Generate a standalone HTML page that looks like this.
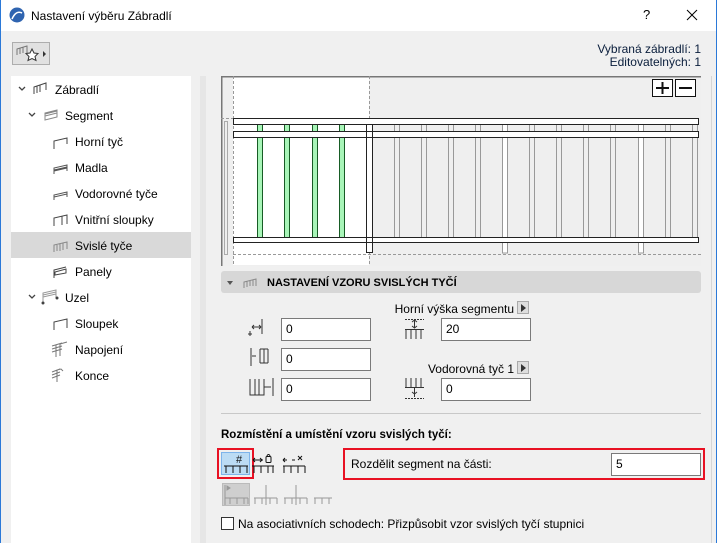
<!DOCTYPE html>
<html><head><meta charset="utf-8"><style>
*{margin:0;padding:0;box-sizing:border-box}
body{width:717px;height:543px;overflow:hidden;background:#f0f0f0;font-family:"Liberation Sans",sans-serif;font-size:12px;color:#000;position:relative}
.a{position:absolute}
.t{position:absolute;white-space:nowrap;line-height:14px}
.inp{position:absolute;background:#fff;border:1px solid #7a7a7a;height:23px;padding-left:4px;line-height:21px}
.row{position:absolute;left:11px;width:180px;height:26px}
</style></head><body>
<div class="a" style="left:0;top:0;width:717px;height:31px;background:#fff"></div>
<div class="a" style="left:0;top:0;width:1px;height:543px;background:#2b79d8"></div>
<div class="a" style="left:716px;top:0;width:1px;height:543px;background:#2b79d8"></div>
<svg class="a" style="left:9px;top:7px" width="16" height="16"><circle cx="8" cy="8" r="7.5" fill="#2f64b0"/><path d="M3 12 Q7 3 13 6" stroke="#fff" stroke-width="1.6" fill="none"/></svg>
<div class="t" style="left:31px;top:9px;font-size:12px">Nastavení výběru Zábradlí</div>
<div class="t" style="left:643px;top:8px;font-size:13px">?</div>
<svg class="a" style="left:686px;top:9px" width="12" height="12"><path d="M1 1L11 11M11 1L1 11" stroke="#000" stroke-width="1"/></svg>

<div class="a" style="left:12px;top:42px;width:38px;height:23px;background:#e1e1e1;border:1px solid #adadad"></div>
<svg class="a" style="left:15px;top:45px" width="34" height="18"><path d="M2 10V4L12 1V8M5 9V3M8 8V2M2 4L12 1" stroke="#777" fill="none"/><path d="M17 4l2 4 4 .5-3 3 1 4-4-2-4 2 1-4-3-3 4-.5z" stroke="#333" fill="#fff"/><path d="M28 6l3 3-3 3z" fill="#333"/></svg>
<div class="t" style="right:16px;top:42px;text-align:right;color:#0a1e3c">Vybraná zábradlí: 1</div>
<div class="t" style="right:16px;top:55px;text-align:right;color:#0a1e3c">Editovatelných: 1</div>

<div class="a" style="left:11px;top:76px;width:180px;height:467px;background:#fff"></div>
<div class="a" style="left:200px;top:76px;width:6px;height:467px;background:#e6e6e6"></div>
<div class="row" style="top:232px;background:#d9d9d9"></div>
<svg class="a" style="left:0;top:76px" width="191" height="320" fill="none" stroke="#444">
<path d="M19 11l3 3 3-3M29 37l3 3 3-3M29 219l3 3 3-3" stroke="#444" stroke-width="1.3"/>
<path d="M34 18V11L46 7V14M34 11L46 7M40 9V16M37 10v7" />
<path d="M45 44V37l12-3v7zM45 40l12-3M45 38l12-3" stroke="#888"/>
<path d="M54 73v-8l13-3v6" />
<path d="M54 98v-6l13-3v6M54 95l13-3M54 94l13-3" stroke="#555"/>
<path d="M54 124v-5l13-3v5M54 121l13-3" stroke="#555"/>
<path d="M54 150v-8l13-3v9M62 149v-9" />
<path d="M54 176v-7l13-3v7M57 175v-6M60 175v-7M63 174v-7" stroke="#888"/>
<path d="M54 202v-8l12-3M55 199l11-2v-4l-11 3z" />
<path d="M43 226v-9l13-3v8M43 219l13-3M43 221l13-3" stroke="#999"/>
<circle cx="43" cy="227" r="1" fill="#333"/><circle cx="57" cy="222" r="1" fill="#333"/>
<path d="M54 254v-8l13-3v9" />
<path d="M52 270l10-3M52 273l10-3M52 276l10-3M56 281v-12M60 280v-12l7-2" stroke="#777"/>
<path d="M52 296l8-3M52 299l8-3M52 302l8-3M57 306v-12l4-1 2 2" stroke="#777"/>
</svg>
<div class="t" style="left:55px;top:83px">Zábradlí</div>
<div class="t" style="left:65px;top:109px">Segment</div>
<div class="t" style="left:75px;top:135px">Horní tyč</div>
<div class="t" style="left:75px;top:161px">Madla</div>
<div class="t" style="left:75px;top:187px">Vodorovné tyče</div>
<div class="t" style="left:75px;top:213px">Vnitřní sloupky</div>
<div class="t" style="left:75px;top:239px">Svislé tyče</div>
<div class="t" style="left:75px;top:265px">Panely</div>
<div class="t" style="left:65px;top:291px">Uzel</div>
<div class="t" style="left:75px;top:317px">Sloupek</div>
<div class="t" style="left:75px;top:343px">Napojení</div>
<div class="t" style="left:75px;top:369px">Konce</div>

<div class="a" style="left:711px;top:76px;width:1px;height:467px;background:#d6d6d6"></div>

<svg class="a" style="left:221px;top:76px" width="480" height="190">
<rect x="0" y="0" width="480" height="190" fill="#efefef"/>
<rect x="12" y="1" width="136" height="188" fill="#fff"/>
<path d="M0.5 0V190M0 0.5H480" stroke="#777" stroke-width="2"/>
<path d="M12.5 0V190M148.5 0V190M0 42.5H12M12 178.5H480" stroke="#999" stroke-dasharray="3,2"/>
<rect x="3.5" y="45.5" width="3" height="133" fill="none" stroke="#aaa"/>
<g stroke="#999" fill="none">
<path d="M173.5 48V162M178.5 48V162M200.5 48V162M205.5 48V162M227.5 48V162M232.5 48V162M254.5 48V162M259.5 48V162M308.5 48V162M313.5 48V162M335.5 48V162M340.5 48V162M362.5 48V162M367.5 48V162M389.5 48V162M394.5 48V162M444.5 48V162M449.5 48V162M471.5 48V162M476.5 48V162"/>
<rect x="281.5" y="48" width="5" height="129" fill="#fff"/>
<rect x="417.5" y="48" width="5" height="129" fill="#fff"/>
</g>
<g stroke="#175c25" fill="#a8f5b8">
<rect x="36.5" y="48" width="5" height="114"/><rect x="63.5" y="48" width="5" height="114"/><rect x="91.5" y="48" width="5" height="114"/><rect x="118.5" y="48" width="5" height="114"/>
</g>
<g fill="#fff" stroke="#222">
<rect x="12.5" y="42.5" width="465" height="6"/>
<rect x="12.5" y="55.5" width="465" height="6"/>
<rect x="12.5" y="161.5" width="465" height="5"/>
</g>
<rect x="145.5" y="48.5" width="6" height="128" fill="#fff" stroke="#222"/>
<path d="M146 55.5h5M146 61.5h5M146 161.5h5M146 166.5h5" stroke="#222"/>
<g fill="#fff" stroke="#111"><rect x="431.5" y="3.5" width="20" height="17"/><rect x="454.5" y="3.5" width="20" height="17"/></g>
<path d="M435 12H448M441.5 6V18M458 12H471" stroke="#111" stroke-width="2"/>
</svg>

<div class="a" style="left:221px;top:271px;width:480px;height:22px;background:#d7d7d7;border-radius:3px"></div>
<svg class="a" style="left:226px;top:278px" width="40" height="12"><path d="M1 3l3 4 3-4z" fill="#555"/><path d="M18 10V4L30 1V8M21 9V3M24 8V2M27 8V2" stroke="#888" fill="none"/></svg>
<div class="t" style="left:267px;top:276px;font-weight:bold;font-size:11px">NASTAVENÍ VZORU SVISLÝCH TYČÍ</div>

<svg class="a" style="left:248px;top:318px" width="30" height="85" fill="none" stroke="#333">
<path d="M14 1V16M4 9H13M4 9l2-2M4 9l2 2M13 9l-2-2M13 9l-2 2M2 13v5M0 16h4"/>
<path d="M3 30v18M8 38H4M12 31v14M16 31v14M20 31v14M12 31h8M12 45h8"/>
<path d="M2 61v16h14V61M7 61v16M11 61v16M16 69h7M25 60v18" />
</svg>
<div class="inp" style="left:281px;top:318px;width:90px">0</div>
<div class="inp" style="left:281px;top:348px;width:90px">0</div>
<div class="inp" style="left:281px;top:378px;width:90px">0</div>

<div class="t" style="right:203px;top:302px">Horní výška segmentu</div>
<div class="a" style="left:517px;top:301px;width:12px;height:13px;background:#ddd;border:1px solid #aaa"></div>
<svg class="a" style="left:520px;top:304px" width="8" height="8"><path d="M1 0l5 4-5 4z" fill="#333"/></svg>
<svg class="a" style="left:405px;top:318px" width="30" height="24" fill="none" stroke="#333">
<path d="M0 1.5h19" stroke-dasharray="2,1"/><path d="M9.5 2v8M7 4l2.5-2 2.5 2M7 8l2.5 2 2.5-2"/><path d="M0 11.5h19M1 11v10M6 11v10M11 11v10M16 11v10"/></svg>
<div class="inp" style="left:441px;top:318px;width:90px">20</div>
<div class="t" style="right:203px;top:362px">Vodorovná tyč 1</div>
<div class="a" style="left:517px;top:361px;width:12px;height:13px;background:#ddd;border:1px solid #aaa"></div>
<svg class="a" style="left:520px;top:364px" width="8" height="8"><path d="M1 0l5 4-5 4z" fill="#333"/></svg>
<svg class="a" style="left:405px;top:378px" width="30" height="24" fill="none" stroke="#333">
<path d="M1 0v10M6 0v10M11 0v10M16 0v10M0 9.5h19"/><path d="M9.5 10v9M7 14l2.5 2 2.5-2"/><path d="M0 20.5h19" stroke-dasharray="2,1"/></svg>
<div class="inp" style="left:441px;top:378px;width:90px">0</div>

<div class="a" style="left:221px;top:413px;width:480px;height:1px;background:#c8c8c8"></div>
<div class="t" style="left:221px;top:428px;font-weight:bold;font-size:11.5px">Rozmístění a umístění vzoru svislých tyčí:</div>

<div class="a" style="left:217px;top:448px;width:37px;height:31px;border:2px solid #e81123"></div>
<div class="a" style="left:221px;top:452px;width:29px;height:23px;background:#bcdcf4;border:1px solid #7eb4ea"></div>
<svg class="a" style="left:221px;top:452px" width="90" height="24" fill="none" stroke="#111">
<path d="M3 14h24M5 14v7M12 14v7M19 14v7M26 14v7"/><text x="15" y="11" font-size="11" font-family="Liberation Sans" fill="#111" stroke="none">#</text>
<path d="M31 14h22M33 14v7M40 14v7M47 14v7M52 14v7M32 8h10M32 8l2-2M32 8l2 2M41 8l-2-2M41 8l-2 2"/><rect x="45" y="4.5" width="5" height="6" rx="1"/><path d="M46 4.5a1.5 2 0 0 1 3 0"/>
<path d="M62 14h22M63 14v7M70 14v7M77 14v7M84 14v7M62 8h4M71 8h3M62 8l2-2M62 8l2 2" /><path d="M77 4l4 4M81 4l-4 4"/>
</svg>
<div class="a" style="left:343px;top:448px;width:362px;height:32px;border:2px solid #e81123"></div>
<div class="t" style="left:351px;top:457px">Rozdělit segment na části:</div>
<div class="inp" style="left:611px;top:453px;width:90px">5</div>

<div class="a" style="left:222px;top:483px;width:28px;height:23px;background:#cfcfcf;border:1px solid #bbb"></div>
<svg class="a" style="left:222px;top:483px" width="110" height="24" fill="none" stroke="#999">
<path d="M3 2v20M3 15h23M8 15v6M15 15v6M22 15v6M26 15v6"/><path d="M5 3l3 2-3 2z" fill="#999"/>
<path d="M32 15h23M33 15v6M40 15v6M48 15v6M55 15v6M44 2v20"/>
<path d="M62 15h23M63 15v6M70 15v6M78 15v6M85 15v6M74 2v20"/>
<path d="M92 15h23M93 15v6M100 15v6M107 15v6M114 15v6M114 2v20"/>
</svg>

<div class="a" style="left:221px;top:517px;width:13px;height:13px;background:#fff;border:1px solid #333"></div>
<div class="t" style="left:238px;top:517px">Na asociativních schodech: Přizpůsobit vzor svislých tyčí stupnici</div>
</body></html>
